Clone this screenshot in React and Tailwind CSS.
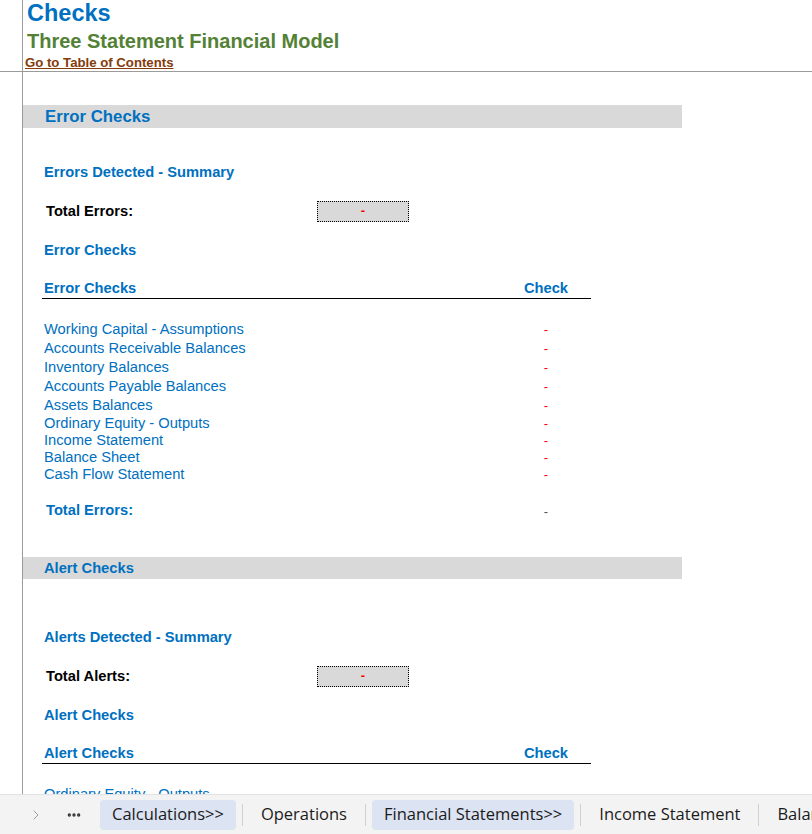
import { ChevronRight, Ellipsis } from 'lucide-react';

const BLUE = 'text-[#0070C0]';

const errorRows = [
  { name: 'Working Capital - Assumptions', h: 'h-[19px]' },
  { name: 'Accounts Receivable Balances', h: 'h-[19px]' },
  { name: 'Inventory Balances', h: 'h-[19px]' },
  { name: 'Accounts Payable Balances', h: 'h-[19px]' },
  { name: 'Assets Balances', h: 'h-[19px]' },
  { name: 'Ordinary Equity - Outputs', h: 'h-[17px]' },
  { name: 'Income Statement', h: 'h-[17px]' },
  { name: 'Balance Sheet', h: 'h-[17px]' },
  { name: 'Cash Flow Statement', h: 'h-[17px]' },
];

function Band({ label, big }) {
  return (
    <div className={`bg-[#D9D9D9] w-[659px] flex items-center ${big ? 'h-[23px] pl-[22px]' : 'h-[22px] pl-[21px]'}`}>
      <span className={`font-bold ${BLUE} ${big ? 'text-[16.8px]' : 'text-[14.7px]'}`}>{label}</span>
    </div>
  );
}

function Heading({ label, mt }) {
  return (
    <div className={`h-[20px] flex items-center pl-[21px] ${mt}`}>
      <span className={`font-bold text-[14.7px] ${BLUE}`}>{label}</span>
    </div>
  );
}

function TotalBox({ label, mt }) {
  return (
    <div className={`h-[22px] flex items-center ${mt}`}>
      <span className="w-[294px] pl-[23px] font-bold text-[14.7px] text-black">{label}</span>
      <div className="w-[92px] h-[21px] bg-[#D9D9D9] border border-dotted border-black flex items-center justify-center">
        <span className="text-[#FF0000] font-bold text-[13px]">-</span>
      </div>
    </div>
  );
}

function TableHeader({ label, mt }) {
  return (
    <div className={`ml-[19px] w-[549px] h-[20px] flex items-center border-b border-black ${mt}`}>
      <span className={`flex-1 pl-[2px] font-bold text-[14.7px] ${BLUE}`}>{label}</span>
      <span className={`w-[90px] text-center font-bold text-[14.7px] ${BLUE}`}>Check</span>
    </div>
  );
}

function CheckRow({ name, h }) {
  return (
    <div className={`ml-[19px] w-[549px] flex items-center ${h}`}>
      <span className={`flex-1 pl-[2px] text-[14.7px] ${BLUE}`}>{name}</span>
      <span className="w-[90px] text-center text-[13px] text-[#FF0000]">-</span>
    </div>
  );
}

function Tab({ label, active }) {
  return (
    <div
      className={`shrink-0 h-[30px] px-[12px] flex items-center rounded-[4px] text-[16.5px] text-[#1b1b1b] whitespace-nowrap ${
        active ? 'bg-[#DCE3F2]' : ''
      }`}
    >
      {label}
    </div>
  );
}

function Sep() {
  return <div className="shrink-0 w-px h-[22px] bg-[#d0d0d0] mx-[6px]" />;
}

export default function App() {
  return (
    <div
      className="w-[812px] h-[834px] bg-white flex flex-col overflow-hidden"
      style={{ fontFamily: '"Liberation Sans", Arial, sans-serif' }}
    >
      <div className="flex-1 flex flex-col overflow-hidden">
        {/* frozen title rows */}
        <div className="shrink-0 flex h-[72px] border-b border-[#9b9b9b]">
          <div className="w-[23px] shrink-0 border-r border-[#9b9b9b]" />
          <div className="flex flex-col pl-[4px]">
            <div className="h-[27px] shrink-0 flex items-center">
              <span className={`font-bold text-[23.5px] ${BLUE}`}>Checks</span>
            </div>
            <div className="h-[27px] shrink-0 flex items-center">
              <span className="font-bold text-[20px] text-[#538135]">Three Statement Financial Model</span>
            </div>
            <div className="h-[18px] shrink-0 flex items-center -ml-[2px]">
              <span className="font-bold text-[13.2px] text-[#843C0C] underline">Go to Table of Contents</span>
            </div>
          </div>
        </div>

        <div className="flex-1 flex overflow-hidden">
          <div className="w-[23px] shrink-0 border-r border-[#9b9b9b]" />
          <div className="flex-1">
            <div className="h-[33px]" />
            <Band label="Error Checks" big />
            <Heading label="Errors Detected - Summary" mt="mt-[34px]" />
            <TotalBox label="Total Errors:" mt="mt-[18px]" />
            <Heading label="Error Checks" mt="mt-[18px]" />
            <TableHeader label="Error Checks" mt="mt-[19px]" />
            <div className="mt-[21px]">
              {errorRows.map((r) => (
                <CheckRow key={r.name} name={r.name} h={r.h} />
              ))}
            </div>
            <div className="mt-[17px] ml-[19px] w-[549px] h-[20px] flex items-center">
              <span className={`flex-1 pl-[4px] font-bold text-[14.7px] ${BLUE}`}>Total Errors:</span>
              <span className="w-[90px] text-center text-[13px] text-[#555] pt-[4px]">-</span>
            </div>

            <div className="mt-[37px]">
              <Band label="Alert Checks" />
            </div>
            <Heading label="Alerts Detected - Summary" mt="mt-[48px]" />
            <TotalBox label="Total Alerts:" mt="mt-[18px]" />
            <Heading label="Alert Checks" mt="mt-[18px]" />
            <TableHeader label="Alert Checks" mt="mt-[19px]" />
            <div className="mt-[21px]">
              <CheckRow name="Ordinary Equity - Outputs" h="h-[19px]" />
            </div>
          </div>
        </div>
      </div>

      {/* sheet tabs */}
      <div
        className="h-[40px] shrink-0 bg-[#F3F3F3] border-t border-[#e2e2e2] flex items-center overflow-hidden"
        style={{ fontFamily: '"Open Sans", "Noto Sans", sans-serif' }}
      >
        <div className="shrink-0 w-[66px] flex items-center pl-[28px]">
          <ChevronRight size={16} strokeWidth={1.25} className="text-[#8a8a8a]" />
        </div>
        <div className="shrink-0 w-[34px] flex items-center">
          <Ellipsis size={16} strokeWidth={3} className="text-[#333]" />
        </div>
        <Tab label="Calculations>>" active />
        <Sep />
        <Tab label="Operations" />
        <Sep />
        <Tab label="Financial Statements>>" active />
        <Sep />
        <Tab label="Income Statement" />
        <Sep />
        <Tab label="Balance Sheet" />
      </div>
    </div>
  );
}
